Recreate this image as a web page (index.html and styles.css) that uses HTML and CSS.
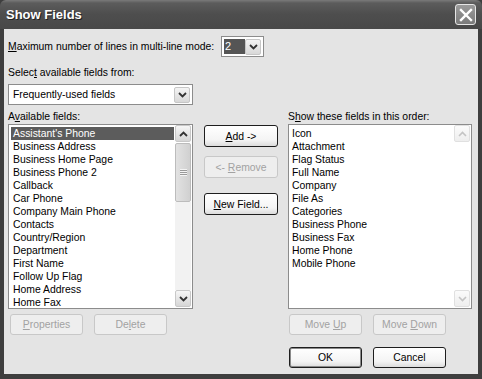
FILE: index.html
```html
<!DOCTYPE html>
<html>
<head>
<meta charset="utf-8">
<link rel="stylesheet" href="styles.css">
</head>
<body>
<div class="window">
  <div class="titlebar">
    <span class="title">Show Fields</span>
    <span class="close"><svg width="14" height="14" viewBox="0 0 14 14"><path d="M2 2 L12 12 M12 2 L2 12" stroke="#fff" stroke-width="2.4" stroke-linecap="square"/></svg></span>
  </div>
  <div class="client">
    <div class="row1">
      <span class="lbl"><u>M</u>aximum number of lines in multi-line mode:</span>
      <div class="combo small"><span class="cval"><span class="csel">2</span></span><span class="drop"><svg width="9" height="6" viewBox="0 0 9 6"><path d="M1 1 L4.5 4.5 L8 1" fill="none" stroke="#333" stroke-width="1.8"/></svg></span></div>
    </div>
    <div class="lbl2">Selec<u>t</u> available fields from:</div>
    <div class="combo wide"><span class="cval">Frequently-used fields</span><span class="drop"><svg width="9" height="6" viewBox="0 0 9 6"><path d="M1 1 L4.5 4.5 L8 1" fill="none" stroke="#333" stroke-width="1.8"/></svg></span></div>
    <div class="main">
      <div class="col left">
        <div class="clbl">A<u>v</u>ailable fields:</div>
        <div class="list">
          <div class="items">
            <div class="item sel">Assistant's Phone</div>
            <div class="item">Business Address</div>
            <div class="item">Business Home Page</div>
            <div class="item">Business Phone 2</div>
            <div class="item">Callback</div>
            <div class="item">Car Phone</div>
            <div class="item">Company Main Phone</div>
            <div class="item">Contacts</div>
            <div class="item">Country/Region</div>
            <div class="item">Department</div>
            <div class="item">First Name</div>
            <div class="item">Follow Up Flag</div>
            <div class="item">Home Address</div>
            <div class="item">Home Fax</div>
          </div>
          <div class="sbar">
            <span class="sbtn"><svg width="9" height="6" viewBox="0 0 9 6"><path d="M1 5 L4.5 1.5 L8 5" fill="none" stroke="#333" stroke-width="1.8"/></svg></span>
            <span class="thumb"><span class="grip"></span></span>
            <span class="strack"></span>
            <span class="sbtn"><svg width="9" height="6" viewBox="0 0 9 6"><path d="M1 1 L4.5 4.5 L8 1" fill="none" stroke="#333" stroke-width="1.8"/></svg></span>
          </div>
        </div>
        <div class="btnrow">
          <span class="btn dis"><span><u>P</u>roperties</span></span>
          <span class="btn dis"><span>De<u>l</u>ete</span></span>
        </div>
      </div>
      <div class="col mid">
        <span class="btn"><span><u>A</u>dd -&gt;</span></span>
        <span class="btn dis r"><span>&lt;- <u>R</u>emove</span></span>
        <span class="btn nf"><span><u>N</u>ew Field...</span></span>
      </div>
      <div class="col right">
        <div class="clbl">S<u>h</u>ow these fields in this order:</div>
        <div class="list">
          <div class="items ritems">
            <div class="item">Icon</div>
            <div class="item">Attachment</div>
            <div class="item">Flag Status</div>
            <div class="item">Full Name</div>
            <div class="item">Company</div>
            <div class="item">File As</div>
            <div class="item">Categories</div>
            <div class="item">Business Phone</div>
            <div class="item">Business Fax</div>
            <div class="item">Home Phone</div>
            <div class="item">Mobile Phone</div>
          </div>
          <div class="sbar disabled">
            <span class="sbtn"><svg width="9" height="6" viewBox="0 0 9 6"><path d="M1 5 L4.5 1.5 L8 5" fill="none" stroke="#c4c4c4" stroke-width="1.6"/></svg></span>
            <span class="strack"></span>
            <span class="sbtn"><svg width="9" height="6" viewBox="0 0 9 6"><path d="M1 1 L4.5 4.5 L8 1" fill="none" stroke="#c4c4c4" stroke-width="1.6"/></svg></span>
          </div>
        </div>
        <div class="btnrow">
          <span class="btn dis"><span>Move <u>U</u>p</span></span>
          <span class="btn dis"><span>Move <u>D</u>own</span></span>
        </div>
        <div class="btnrow ok">
          <span class="btn def"><span>OK</span></span>
          <span class="btn"><span>Cancel</span></span>
        </div>
      </div>
    </div>
  </div>
</div>
</body>
</html>
```

FILE: styles.css
```css
* { box-sizing: border-box; }
html, body { margin: 0; padding: 0; background: #3a3a3a; }
body { font-family: "Liberation Sans", Arial, sans-serif; font-size: 10.4px; color: #000; }
.window {
  width: 482px; height: 379px;
  background: #3e3e3e;
  display: flex; flex-direction: column;
  padding: 0 4px 5px 4px;
}
.titlebar {
  height: 29px; flex: none;
  margin: 0 -4px;
  background: linear-gradient(#7a7a7a 0px, #5c5c5c 3px, #4e4e4e 14px, #484848 29px);
  border-radius: 6px 6px 0 0;
  display: flex; align-items: center; justify-content: space-between;
  padding: 0 6px 0 6px;
}
.title {
  color: #fff; font-weight: bold; font-size: 13px;
  font-family: "Liberation Sans", Arial, sans-serif;
  text-shadow: 1px 1px 0 #222;
}
.close {
  width: 21px; height: 21px;
  border: 1px solid #e6e6e6; border-radius: 3px;
  background: linear-gradient(#9a9a9a, #7a7a7a);
  display: flex; align-items: center; justify-content: center;
}
.client {
  flex: 1;
  background: #e4e4e4;
  padding: 7px 4px 0 4px;
  display: flex; flex-direction: column;
}
.row1 { display: flex; align-items: center; height: 21px; }
.row1 .lbl { width: 213px; white-space: nowrap; flex: none; }
.combo {
  display: flex; align-items: center;
  border: 1px solid #8c8c8c; background: #fff;
  height: 21px; padding: 1px 2px 1px 2px;
}
.combo.small { width: 43px; }
.combo.small .cval { flex: 1; height: 15px; display: flex; }
.csel { background: #555; color: #fff; width: 21px; height: 15px; padding-left: 1px; line-height: 15px; font-size: 11px; }
.drop {
  width: 16px; height: 16px; margin-left: auto;
  border: 1px solid #c6c6c6; border-radius: 2px;
  background: linear-gradient(#f4f4f4, #d8d8d8);
  display: flex; align-items: center; justify-content: center;
}
.lbl2 { margin-top: 9px; line-height: 13px; }
.combo.wide { margin-top: 5px; width: 185px; height: 21px; }
.combo.wide .cval { padding-left: 2px; }
.main { display: flex; margin-top: 5px; }
.col { display: flex; flex-direction: column; }
.left { width: 185px; }
.right { width: 184px; margin-left: 10px; }
.mid { width: 74px; margin-left: 11px; padding-top: 15px; }
.clbl { line-height: 13px; height: 14px; white-space: nowrap; }
.list {
  height: 185px; border: 1px solid #8c8c8c; background: #fff;
  display: flex;
}
.items { flex: 1; padding: 2px 1px 0 2px; }
.ritems { padding-left: 0px; }
.item { height: 13px; line-height: 13px; padding-left: 2px; white-space: nowrap; }
.ritems .item { padding-left: 3px; }
.item.sel { background: #5c5c5c; color: #fff; }
.sbar { width: 17px; display: flex; flex-direction: column; padding: 0 1px 1px 0; }
.sbtn {
  width: 16px; height: 17px; flex: none;
  border: 1px solid #c8c8c8; border-radius: 2px;
  background: linear-gradient(#f6f6f6, #d6d6d6);
  display: flex; align-items: center; justify-content: center;
}
.thumb {
  height: 59px; width: 16px; margin-top: 1px; flex: none;
  border: 1px solid #bcbcbc; border-radius: 2px;
  background: linear-gradient(90deg, #e2e2e2, #d0d0d0);
  display: flex; align-items: center; justify-content: center;
}
.grip { width: 7px; height: 7px; background: repeating-linear-gradient(#f4f4f4 0 1px, #9a9a9a 1px 2px); }
.strack { flex: 1; background: #f2f2f2; }
.sbar.disabled .strack { background: #fff; }
.sbar.disabled .sbtn { border-color: #e0e0e0; background: linear-gradient(#fbfbfb, #eeeeee); }
.btnrow { display: flex; gap: 11px; margin-top: 5px; padding-left: 2px; }
.right .btnrow { padding-left: 1px; }
.btnrow.ok { margin-top: 12px; }
.btn {
  width: 73px; height: 21px; flex: none;
  border: 1px solid #1e1e1e; border-radius: 3px;
  background: linear-gradient(#ffffff, #f4f4f4 70%, #dcdcdc);
  display: flex; align-items: center; justify-content: center;
  white-space: nowrap;
}
.btn.dis { border-color: #c8c8c8; background: #eeeeee; color: #a2a2a2; }
.btn.def { border: 1px solid #1e1e1e; box-shadow: inset 0 0 0 1px #8a8a8a; }
.mid .btn { width: 74px; height: 22px; }
.mid .r { margin-top: 9px; }
.mid .nf { margin-top: 15px; }
u { text-decoration: underline; text-underline-offset: 1px; }
```
